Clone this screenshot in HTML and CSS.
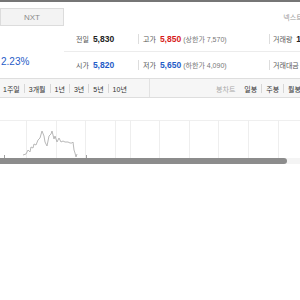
FILE: index.html
```html
<!DOCTYPE html>
<html lang="ko">
<head>
    <meta charset="UTF-8">
    <title>시세</title>
    <link rel="stylesheet" href="styles.css">
</head>
<body>
    <div class="topline"></div>
    <div class="head">
        <button class="nxt">NXT</button>
        <span class="market">넥스트레이드</span>
    </div>
    <div class="info">
        <div class="rate"><span>2.23%</span></div>
        <div class="rows">
            <div class="row first">
                <div class="cell c1"><span class="lbl">전일</span><b>5,830</b></div>
                <div class="cell c2"><span class="lbl">고가</span><b class="up">5,850</b><span class="sub">(상한가 7,570)</span></div>
                <div class="cell c3"><span class="lbl">거래량</span><b>120,341</b></div>
            </div>
            <div class="row">
                <div class="cell c1"><span class="lbl">시가</span><b class="down">5,820</b></div>
                <div class="cell c2"><span class="lbl">저가</span><b class="down">5,650</b><span class="sub">(하한가 4,090)</span></div>
                <div class="cell c3"><span class="lbl">거래대금</span><b>7억</b></div>
            </div>
        </div>
    </div>
    <div class="tabs">
        <div class="periods">
            <span>1주일</span><span>3개월</span><span>1년</span><span>3년</span><span>5년</span><span>10년</span>
        </div>
        <div class="kinds">
            <span class="dim">봉차트</span><span>일봉</span><span>주봉</span><span>월봉</span>
        </div>
    </div>
    <div class="chart">
        <svg width="300" height="60" viewBox="0 0 300 60">
            <line x1="0" y1="22.5" x2="300" y2="22.5" stroke="#efefef"/>
            <g stroke="#eeeeee">
                <line x1="26.5" y1="22" x2="26.5" y2="60"/>
                <line x1="56.5" y1="22" x2="56.5" y2="60"/>
                <line x1="85.5" y1="22" x2="85.5" y2="60"/>
                <line x1="115.5" y1="22" x2="115.5" y2="60"/>
                <line x1="130.5" y1="22" x2="130.5" y2="60"/>
                <line x1="159.5" y1="22" x2="159.5" y2="60"/>
                <line x1="189.5" y1="22" x2="189.5" y2="60"/>
                <line x1="218.5" y1="22" x2="218.5" y2="60"/>
                <line x1="248.5" y1="22" x2="248.5" y2="60"/>
                <line x1="278.5" y1="22" x2="278.5" y2="60"/>
            </g>
            <polyline fill="none" stroke="#b8b8b8" stroke-width="1"
                points="23,57 26,56 28,52 30,54 31,49 33,50 34,46 36,47 38,42 40,40 42,33 44,38 45,44 47,48 49,38 51,36 52,33 54,41 55,38 57,44 59,40 61,44 63,43 65,44 68,44 70,45 72,45 73,44 74,52 75,55 76,59 77,56"/>
            <g stroke="#a0a0a0">
                <line x1="4.5" y1="57" x2="4.5" y2="60"/>
                <line x1="86.5" y1="57" x2="86.5" y2="60"/>
            </g>
        </svg>
    </div>
    <div class="scroll">
        <div class="thumb"></div>
    </div>
</body>
</html>
```

FILE: styles.css
```css
body {
    margin: 0;
    width: 300px;
    height: 300px;
    overflow: hidden;
    background-color: #ffffff;
    font-family: "Liberation Sans", "Noto Sans CJK KR", sans-serif;
    color: #333;
}

.topline {
    height: 2px;
    background-color: #767676;
}

.head {
    display: flex;
    align-items: center;
    justify-content: space-between;
    padding-top: 6px;
    height: 18px;
}

.nxt {
    width: 64px;
    height: 18px;
    padding: 0;
    border: 1px solid #dcdcdc;
    background-color: #f3f3f3;
    color: #8a8a8a;
    font-family: "Liberation Sans", sans-serif;
    font-size: 8px;
}

.market {
    font-size: 7px;
    color: #999;
    margin-right: -22px;
    white-space: nowrap;
}

.info {
    display: flex;
    height: 51px;
}

.rate {
    flex-shrink: 0;
    width: 64px;
    display: flex;
    align-items: flex-end;
    padding-bottom: 10px;
    box-sizing: border-box;
}

.rate span {
    color: #1f5cc7;
    font-size: 10px;
    margin-left: 1px;
}

.rows {
    flex: 1;
    min-width: 0;
}

.row {
    display: flex;
    align-items: center;
    height: 25px;
    padding-left: 12px;
    white-space: nowrap;
    font-size: 7px;
}

.row.first {
    border-bottom: 1px solid #ececec;
}

.cell {
    display: flex;
    flex-shrink: 0;
    align-items: center;
    height: 10px;
}

.c1 {
    width: 62px;
}

.c2 {
    width: 126px;
    border-left: 1px solid #dddddd;
    padding-left: 4px;
}

.c3 {
    border-left: 1px solid #dddddd;
    padding-left: 3px;
}

.lbl {
    color: #555;
    margin-right: 4px;
}

.row b {
    font-size: 8.5px;
    color: #222;
    margin-right: 2px;
}

.row b.up {
    color: #d71a1a;
}

.row b.down {
    color: #1f5cc7;
}

.sub {
    color: #777;
}

.tabs {
    display: flex;
    align-items: center;
    height: 18px;
    margin-top: 1px;
    background-color: #f6f6f6;
    border-top: 1px solid #dedede;
    border-bottom: 1px solid #dedede;
    font-size: 7px;
    white-space: nowrap;
}

.periods {
    display: flex;
    align-items: center;
    flex-shrink: 0;
    width: 150px;
    height: 100%;
    border-right: 1px solid #e2e2e2;
    padding-left: 3px;
    box-sizing: border-box;
}

.periods span,
.kinds span {
    display: flex;
    align-items: center;
    height: 8px;
    padding-top: 1px;
    color: #333;
}

.periods span + span,
.kinds span + span {
    border-left: 1px solid #d6d6d6;
    margin-left: 4px;
    padding-left: 4px;
}

.kinds {
    display: flex;
    align-items: center;
    margin-left: auto;
    margin-right: -1px;
}

.kinds .dim {
    color: #aaa;
    margin-right: 9px;
}

.kinds .dim + span {
    border-left: none;
    margin-left: 0;
    padding-left: 0;
}

.chart {
    height: 60px;
}

.chart svg {
    display: block;
}

.scroll {
    display: flex;
    height: 6px;
    background-color: #f4f4f4;
}

.thumb {
    width: 287px;
    background-color: #8c8c8c;
    border-radius: 0 3px 3px 0;
}
```
